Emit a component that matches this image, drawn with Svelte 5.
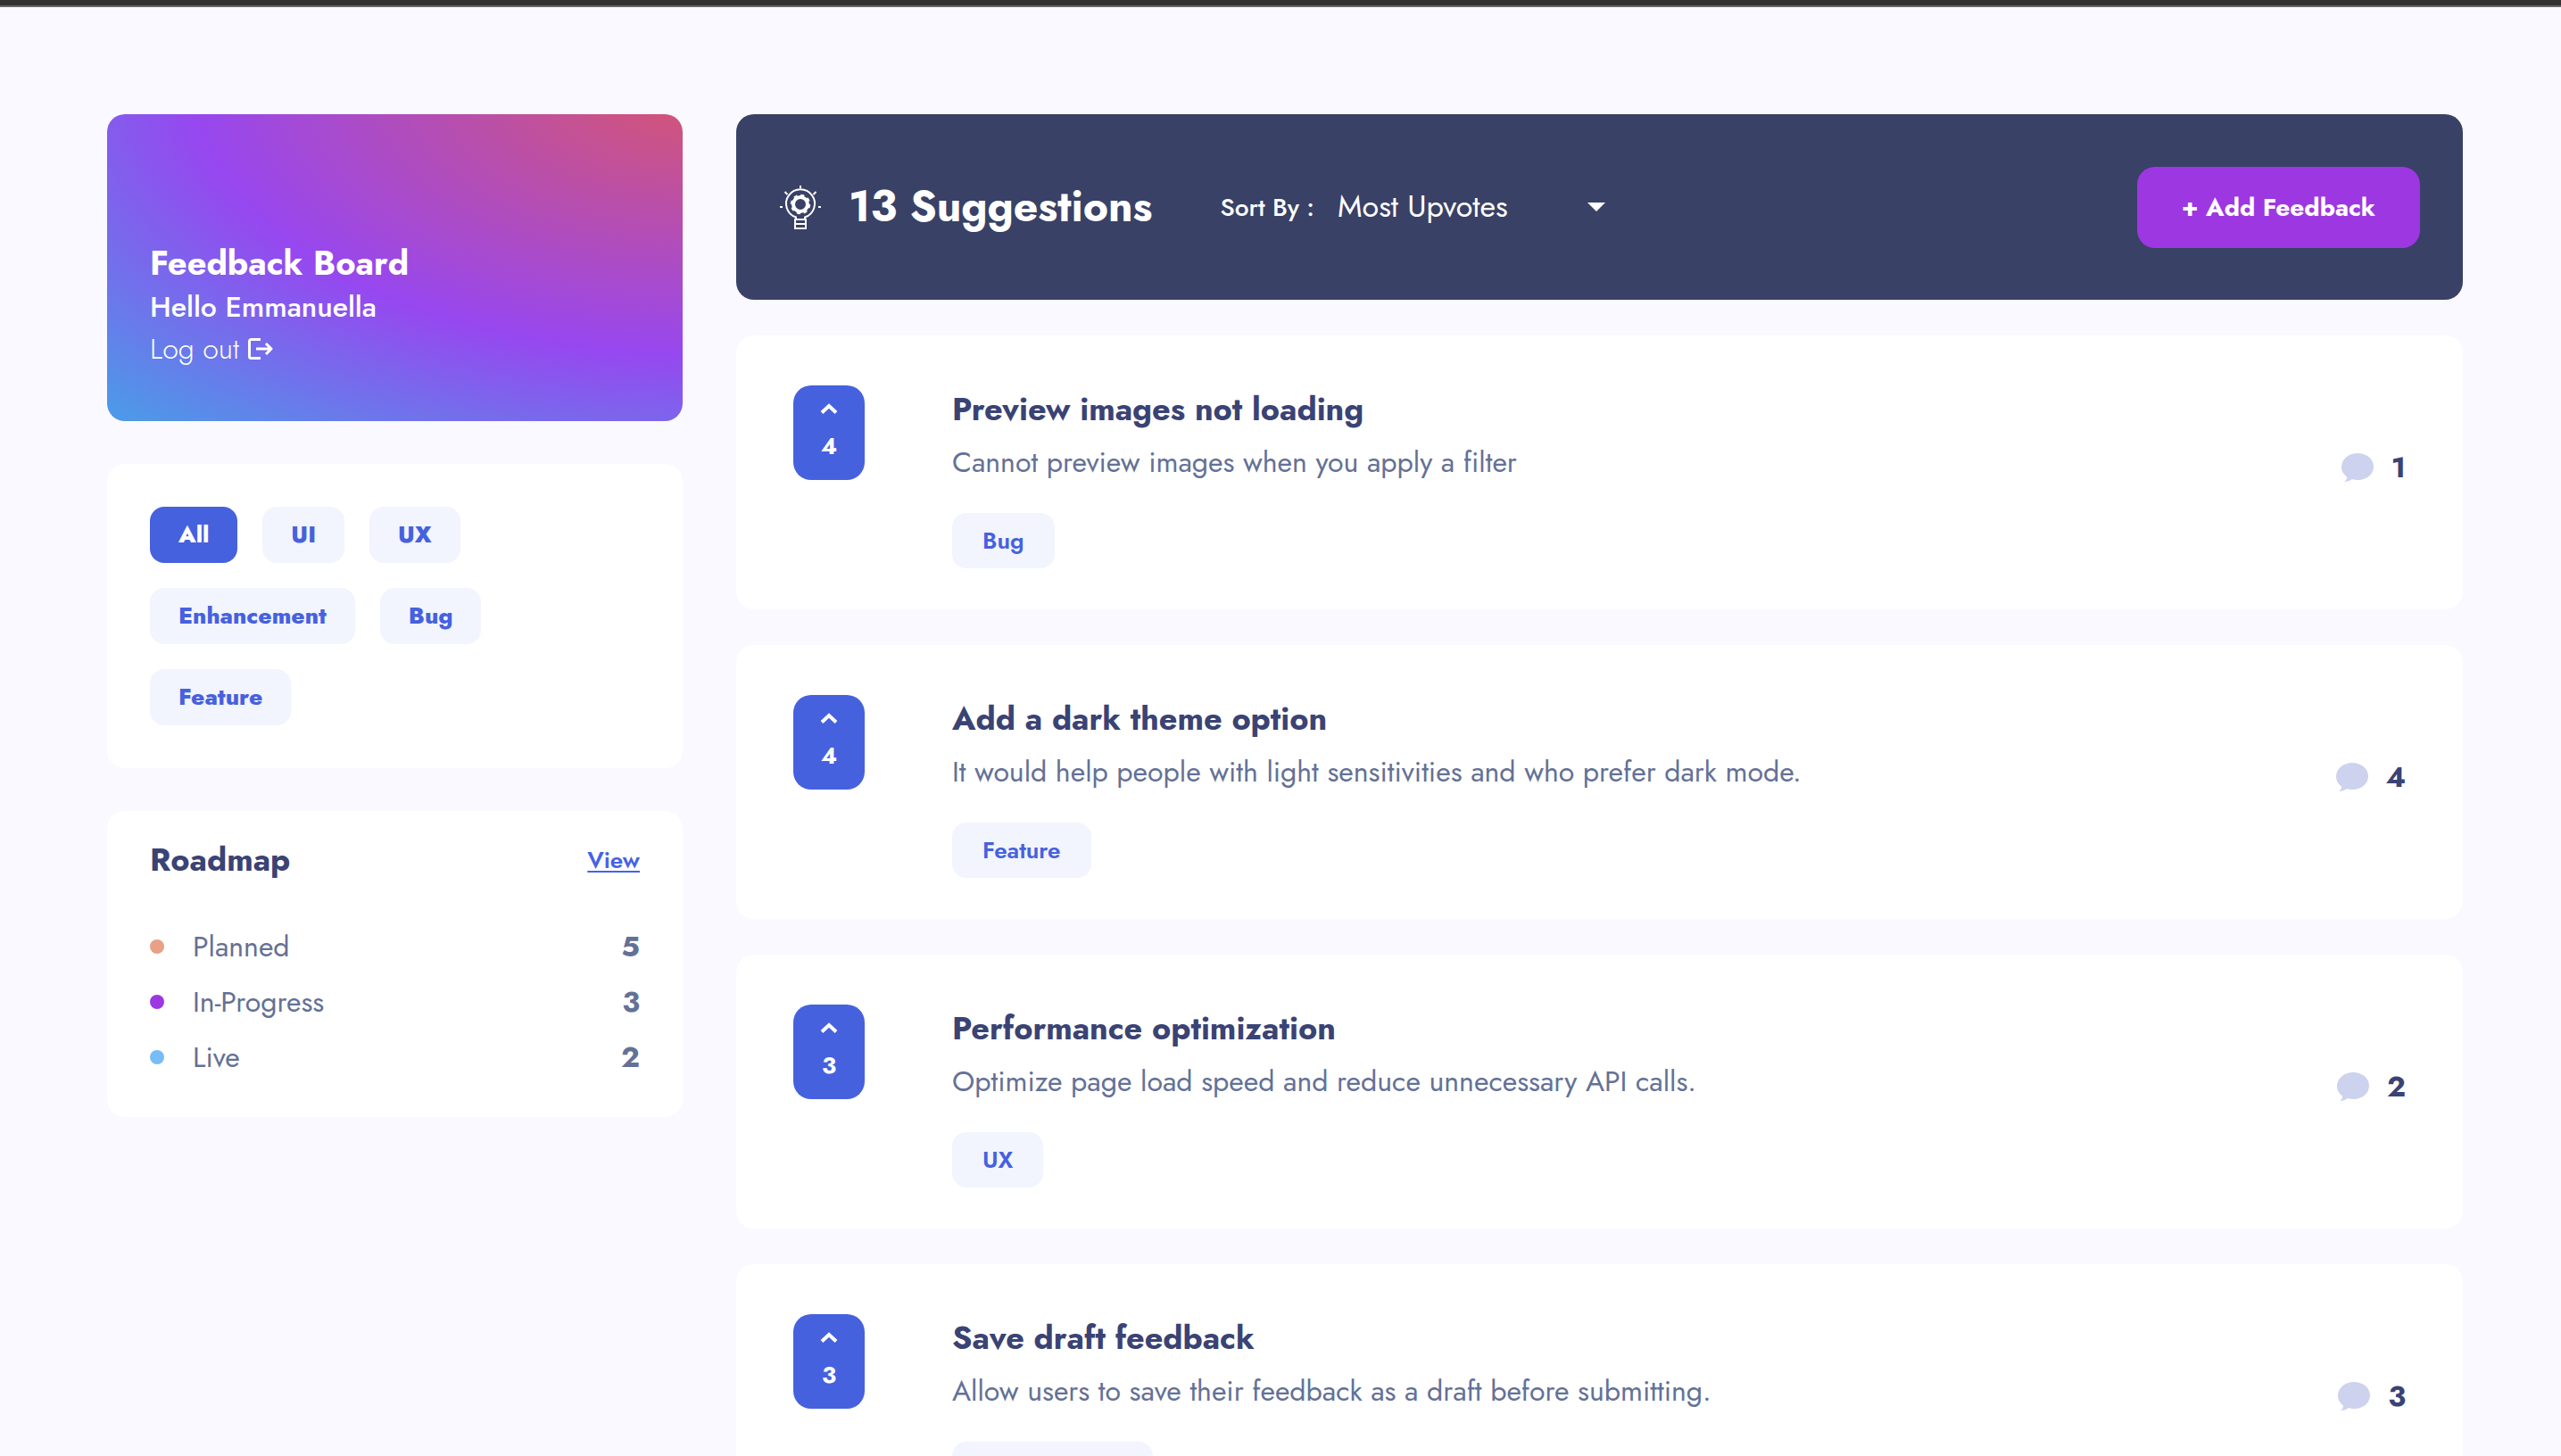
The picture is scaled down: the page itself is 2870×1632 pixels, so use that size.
<script>
  const filters = ['All', 'UI', 'UX', 'Enhancement', 'Bug', 'Feature'];
  let active = $state('All');
  let sort = $state('Most Upvotes');

  const roadmap = [
    { name: 'Planned', tone: 'planned', count: 5 },
    { name: 'In-Progress', tone: 'progress', count: 3 },
    { name: 'Live', tone: 'live', count: 2 },
  ];

  const suggestions = $state([
    { title: 'Preview images not loading', text: 'Cannot preview images when you apply a filter', tag: 'Bug', votes: 4, comments: 1 },
    { title: 'Add a dark theme option', text: 'It would help people with light sensitivities and who prefer dark mode.', tag: 'Feature', votes: 4, comments: 4 },
    { title: 'Performance optimization', text: 'Optimize page load speed and reduce unnecessary API calls.', tag: 'UX', votes: 3, comments: 2 },
    { title: 'Save draft feedback', text: 'Allow users to save their feedback as a draft before submitting.', tag: 'Enhancement', votes: 3, comments: 3 },
  ]);
</script>

<div class="page">
  <aside class="side">
    <section class="hero">
      <h2>Feedback Board</h2>
      <p class="hello">Hello Emmanuella</p>
      <button class="logout" type="button">
        Log out
        <svg width="28" height="24" viewBox="0 0 28 24" fill="none" stroke="currentColor" stroke-width="3" aria-hidden="true">
          <path d="M14 1.5H3.500a2 2 0 0 0-2 2v17a2 2 0 0 0 2 2H14" />
          <path d="M9 12h17M20 6l6 6-6 6" stroke-linejoin="round" />
        </svg>
      </button>
    </section>

    <section class="filters" aria-label="Categories">
      {#each filters as name}
        <button type="button" class="chip" class:active={active === name} onclick={() => (active = name)}>{name}</button>
      {/each}
    </section>

    <section class="roadmap">
      <header>
        <h3>Roadmap</h3>
        <a href="#roadmap">View</a>
      </header>
      <ul>
        {#each roadmap as row}
          <li>
            <span class="dot {row.tone}"></span>
            <span class="name">{row.name}</span>
            <strong>{row.count}</strong>
          </li>
        {/each}
      </ul>
    </section>
  </aside>

  <main>
    <header class="bar">
      <svg class="bulb" width="48" height="50" viewBox="0 0 48 50" fill="none" stroke="currentColor" aria-hidden="true">
        <path stroke-width="2" d="M24 1v3M6.500 8l3 3M41.500 8l-3 3M1 25h3M44 25h3" />
        <path stroke-width="2" d="M19 38v-1.500A16 16 0 1 1 29 36.500V38" />
        <path stroke-width="2" d="M18 39h12v10H18zM17 44h14" />
        <circle cx="24" cy="22" r="8" stroke-width="4" />
        <circle cx="24" cy="22" r="10" stroke-width="2.500" stroke-dasharray="4 3.854" />
      </svg>
      <h1>13 Suggestions</h1>
      <label for="sort">Sort By :</label>
      <div class="select">
        <select id="sort" bind:value={sort}>
          <option>Most Upvotes</option>
          <option>Least Upvotes</option>
          <option>Most Comments</option>
          <option>Least Comments</option>
        </select>
        <svg width="20" height="10" viewBox="0 0 20 10" fill="currentColor" aria-hidden="true"><path d="M0 0h20L10 10z" /></svg>
      </div>
      <button class="add" type="button">+ Add Feedback</button>
    </header>

    {#each suggestions as item}
      <article>
        <button class="vote" type="button" aria-label="Upvote {item.title}" onclick={() => item.votes++}>
          <svg width="20" height="12" viewBox="0 0 20 12" fill="none" stroke="currentColor" stroke-width="4" aria-hidden="true"><path d="M2 10.500l8-7.500 8 7.500" /></svg>
          {item.votes}
        </button>
        <div class="body">
          <h3>{item.title}</h3>
          <p>{item.text}</p>
          <span class="tag">{item.tag}</span>
        </div>
        <div class="comments">
          <svg width="36" height="32" viewBox="0 0 36 32" fill="currentColor" aria-hidden="true">
            <path d="M18 0c10 0 18 6.500 18 15s-8 15-17 15c-3 0-5-.3-7-1-2.500 2-5.500 3-9 3 2-1.500 3.500-3.500 3-5.500C2.500 24 0 20 0 15.500 0 6.500 8 0 18 0z" />
          </svg>
          {item.comments}
        </div>
      </article>
    {/each}
  </main>
</div>

<style>
  :global(body) {
    margin: 0;
    background: #faf9ff;
    font-family: Jost, Lato, sans-serif;
  }
  .page {
    display: grid;
    grid-template-columns: minmax(0, 1fr) minmax(0, 3fr);
    gap: 60px;
    align-items: start;
    padding: 120px 110px 40px 120px;
    border-top: 6px solid #333;
    box-shadow: inset 0 2px #666;
    color: #3a4374;
  }
  h1, h2, h3, p, ul { margin: 0; padding: 0; }
  button, select { border: 0; font: inherit; color: inherit; cursor: pointer; }
  .side { display: flex; flex-direction: column; gap: 48px; padding-top: 2px; }
  main { display: flex; flex-direction: column; gap: 40px; padding-top: 2px; }

  .hero {
    display: flex;
    flex-direction: column;
    justify-content: flex-end;
    align-items: flex-start;
    box-sizing: border-box;
    min-height: 344px;
    padding: 48px 48px 58px;
    border-radius: 20px;
    color: #fff;
    background: radial-gradient(168% 166% at 104% -10%, #d8566c 0%, #9747ef 53%, #4f97e8 88%);
  }
  .hero h2 { font-size: 38px; line-height: 50px; font-weight: 700; }
  .hello { font-size: 32px; line-height: 48px; font-weight: 500; }
  .logout {
    display: flex;
    align-items: center;
    gap: 10px;
    padding: 0;
    background: none;
    font-size: 32px;
    line-height: 46px;
    font-weight: 300;
  }

  .filters, .roadmap { border-radius: 20px; background: #fff; }
  .filters { display: flex; flex-wrap: wrap; gap: 28px; padding: 48px 160px 48px 48px; }
  .chip, .tag {
    border-radius: 16px;
    background: #f2f4fe;
    color: #4661de;
    font-size: 26px;
  }
  .chip { padding: 0 32px; line-height: 63px; font-weight: 800; }
  .chip.active { background: #4661de; color: #fff; }

  .roadmap { padding: 28px 48px 36px; }
  .roadmap header { display: flex; justify-content: space-between; align-items: center; margin-bottom: 40px; }
  .roadmap h3 { font-size: 36px; line-height: 53px; }
  .roadmap a { color: #4661e6; font-size: 26px; font-weight: 600; text-underline-offset: 3px; text-decoration-thickness: 2px; }
  .roadmap ul { list-style: none; }
  .roadmap li { display: flex; align-items: center; font-size: 32px; line-height: 62px; color: #647196; }
  .dot { width: 16px; height: 16px; margin-right: 32px; border-radius: 50%; }
  .planned { background: #e8a087; }
  .progress { background: #9d37e2; }
  .live { background: #78bcf6; }
  .name { flex: 1; }

  .bar {
    display: flex;
    align-items: center;
    box-sizing: border-box;
    min-height: 208px;
    padding: 0 48px;
    border-radius: 20px;
    background: #394166;
    color: #fff;
  }
  .bulb { margin-right: 30px; }
  h1 { margin-right: 76px; font-size: 48px; line-height: 60px; font-weight: 700; }
  label { margin-right: 26px; font-size: 28px; font-weight: 500; }
  .select { position: relative; display: flex; align-items: center; }
  select { appearance: none; width: 300px; padding: 0; background: none; font-size: 34px; line-height: 44px; }
  option { color: #3a4374; }
  .select svg { position: absolute; right: 0; pointer-events: none; }
  .add { margin-left: auto; padding: 0 50px; border-radius: 20px; background: #9d37e2; font-size: 28px; line-height: 91px; font-weight: 700; }

  article {
    display: flex;
    align-items: flex-start;
    padding: 54px 64px 46px;
    border-radius: 20px;
    background: #fff;
  }
  .vote {
    display: flex;
    flex-direction: column;
    align-items: center;
    gap: 14px;
    width: 80px;
    margin-top: 2px;
    padding: 20px 0 16px;
    border-radius: 20px;
    background: #4661de;
    color: #fff;
    font-size: 26px;
    line-height: 44px;
    font-weight: 700;
  }
  .body { flex: 1; margin-left: 98px; }
  .body h3 { font-size: 36px; line-height: 56px; }
  .body p { margin: 6px 0 30px; font-size: 32px; line-height: 53px; color: #647196; }
  .tag { display: inline-block; padding: 0 34px; line-height: 62px; font-weight: 600; }
  .comments {
    display: flex;
    align-self: center;
    align-items: center;
    gap: 20px;
    padding-bottom: 20px;
    font-size: 32px;
    font-weight: 700;
  }
  .comments svg { color: #cdd2ee; }
</style>
